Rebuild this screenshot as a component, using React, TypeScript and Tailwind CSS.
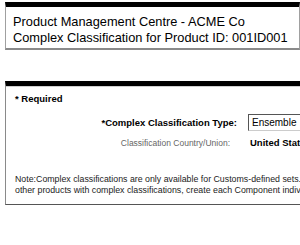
export default function App() {
  return (
    <div className="w-[300px] h-[245px] overflow-hidden bg-white font-['Liberation_Sans',Arial,sans-serif] text-black">
      {/* page header */}
      <div className="ml-[5px] mt-[2px] w-[295px] border-t-[5px] border-t-black border-x border-x-[#a0a0a0] border-b-2 border-b-[#8a8a8a] pl-[7px] pt-[7px] pb-[2px] text-[12.8px] leading-[16px] whitespace-nowrap">
        <div>Product Management Centre - ACME Co</div>
        <div>Complex Classification for Product ID: 001ID001</div>
      </div>

      {/* form panel */}
      <div className="ml-[5px] mt-[31px] w-[420px] border-t-[5px] border-t-black border-l border-l-[#8a8a8a] border-b border-b-[#555]">
        <div className="border-t border-t-[#d0d0d0] pl-[9px] pt-[6px] pb-[8px]">
          <div className="text-[9.5px] leading-[12px] font-bold">* Required</div>

          <div className="mt-[9px] flex items-center">
            <div className="w-[222px] text-right text-[9.5px] leading-[12px] font-bold whitespace-nowrap">
              *Complex Classification Type:
            </div>
            <div className="ml-[11px] h-[17px] w-[120px] border border-[#555] border-r-[#ccc] border-b-[#ccc] pl-[3px] text-[10px] leading-[15px]">
              Ensemble
            </div>
          </div>

          <div className="mt-[6px] flex items-center">
            <div className="w-[215px] text-right text-[8.5px] leading-[12px] text-[#666] whitespace-nowrap">
              Classification Country/Union:
            </div>
            <div className="ml-[20px] text-[9.5px] leading-[12px] font-bold whitespace-nowrap">
              United States
            </div>
          </div>

          <p className="mt-[25px] text-[8.8px] leading-[11px] text-[#222] whitespace-nowrap">
            Note:Complex classifications are only available for Customs-defined sets. For
            <br />
            other products with complex classifications, create each Component individually.
          </p>
        </div>
      </div>
    </div>
  );
}
